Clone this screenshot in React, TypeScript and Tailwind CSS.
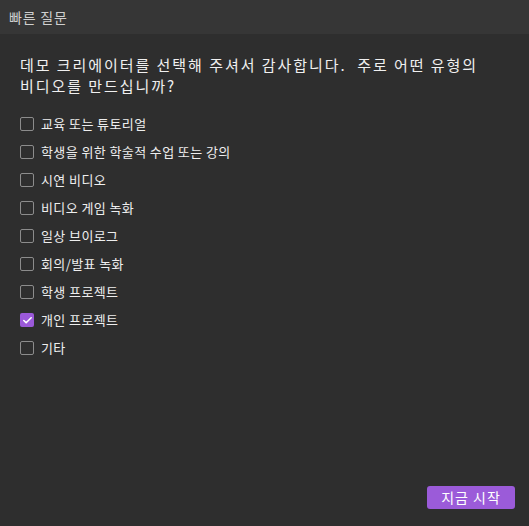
import { Check } from "lucide-react"

const options = [
  { label: "교육 또는 튜토리얼", checked: false },
  { label: "학생을 위한 학술적 수업 또는 강의", checked: false },
  { label: "시연 비디오", checked: false },
  { label: "비디오 게임 녹화", checked: false },
  { label: "일상 브이로그", checked: false },
  { label: "회의/발표 녹화", checked: false },
  { label: "학생 프로젝트", checked: false },
  { label: "개인 프로젝트", checked: true },
  { label: "기타", checked: false },
]

export default function App() {
  return (
    <div
      className="w-[529px] h-[526px] bg-[#2e2e2e] flex flex-col overflow-hidden"
      style={{ fontFamily: '"Noto Sans CJK KR", "Noto Sans", sans-serif' }}
    >
      {/* Header */}
      <div className="h-[34px] bg-[#363636] flex items-center px-[9px] shrink-0">
        <span className="text-[14px] tracking-[0.8px] text-[#cfcfcf]">빠른 질문</span>
      </div>

      {/* Content */}
      <div className="flex-1 flex flex-col px-5 pt-[20px]">
        <h1 className="text-[15px] leading-[21px] tracking-[1.95px] text-[#f0f0f0] font-normal whitespace-nowrap">
          데모 크리에이터를 선택해 주셔서 감사합니다.&nbsp; 주로 어떤 유형의
          <br />
          비디오를 만드십니까?
        </h1>

        <div className="flex flex-col mt-[14px]">
          {options.map((o) => (
            <label key={o.label} className="h-[28px] flex items-center gap-[7px]">
              {o.checked ? (
                <span className="w-[14px] h-[14px] rounded-[2px] bg-[#9b59d9] flex items-center justify-center">
                  <Check className="w-[11px] h-[11px] text-white" strokeWidth={3.5} />
                </span>
              ) : (
                <span className="w-[14px] h-[14px] rounded-[2px] border border-[#8c8c8c]" />
              )}
              <span className="text-[13px] tracking-[0.4px] text-[#eeeeee]">{o.label}</span>
            </label>
          ))}
        </div>

        <div className="flex-1" />

        <div className="flex justify-end pb-[17px]">
          <button className="w-[88px] h-[23px] -mr-[6px] rounded-[3px] bg-[#9b5bd9] text-white text-[14px] tracking-[1px] flex items-center justify-center">
            지금 시작
          </button>
        </div>
      </div>
    </div>
  )
}
